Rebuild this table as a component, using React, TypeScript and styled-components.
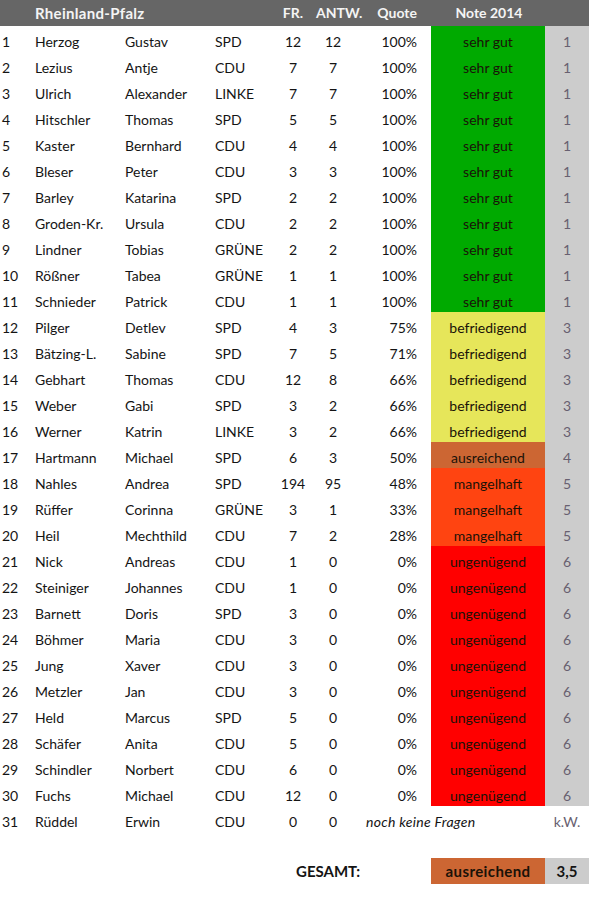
import * as React from 'react';
import styled, { createGlobalStyle } from 'styled-components';

const GlobalStyle = createGlobalStyle`
  body {
    margin: 0;
    background: #ffffff;
    font-family: Lato, 'Noto Sans', 'DejaVu Sans', sans-serif;
    color: #141414;
  }
`;

const COLS = '33px 90px 90px 57px 44px 36px 81px 114px 44px';

const grades: Record<number, { label: string; bg: string }> = {
  1: { label: 'sehr gut', bg: '#00aa00' },
  3: { label: 'befriedigend', bg: '#e6e65a' },
  4: { label: 'ausreichend', bg: '#cc6633' },
  5: { label: 'mangelhaft', bg: '#ff4411' },
  6: { label: 'ungenügend', bg: '#ff0000' },
};

type Row = [string, string, string, number, number, number | null];

const rows: Row[] = [
  ['Herzog', 'Gustav', 'SPD', 12, 12, 1],
  ['Lezius', 'Antje', 'CDU', 7, 7, 1],
  ['Ulrich', 'Alexander', 'LINKE', 7, 7, 1],
  ['Hitschler', 'Thomas', 'SPD', 5, 5, 1],
  ['Kaster', 'Bernhard', 'CDU', 4, 4, 1],
  ['Bleser', 'Peter', 'CDU', 3, 3, 1],
  ['Barley', 'Katarina', 'SPD', 2, 2, 1],
  ['Groden-Kr.', 'Ursula', 'CDU', 2, 2, 1],
  ['Lindner', 'Tobias', 'GRÜNE', 2, 2, 1],
  ['Rößner', 'Tabea', 'GRÜNE', 1, 1, 1],
  ['Schnieder', 'Patrick', 'CDU', 1, 1, 1],
  ['Pilger', 'Detlev', 'SPD', 4, 3, 3],
  ['Bätzing-L.', 'Sabine', 'SPD', 7, 5, 3],
  ['Gebhart', 'Thomas', 'CDU', 12, 8, 3],
  ['Weber', 'Gabi', 'SPD', 3, 2, 3],
  ['Werner', 'Katrin', 'LINKE', 3, 2, 3],
  ['Hartmann', 'Michael', 'SPD', 6, 3, 4],
  ['Nahles', 'Andrea', 'SPD', 194, 95, 5],
  ['Rüffer', 'Corinna', 'GRÜNE', 3, 1, 5],
  ['Heil', 'Mechthild', 'CDU', 7, 2, 5],
  ['Nick', 'Andreas', 'CDU', 1, 0, 6],
  ['Steiniger', 'Johannes', 'CDU', 1, 0, 6],
  ['Barnett', 'Doris', 'SPD', 3, 0, 6],
  ['Böhmer', 'Maria', 'CDU', 3, 0, 6],
  ['Jung', 'Xaver', 'CDU', 3, 0, 6],
  ['Metzler', 'Jan', 'CDU', 3, 0, 6],
  ['Held', 'Marcus', 'SPD', 5, 0, 6],
  ['Schäfer', 'Anita', 'CDU', 5, 0, 6],
  ['Schindler', 'Norbert', 'CDU', 6, 0, 6],
  ['Fuchs', 'Michael', 'CDU', 12, 0, 6],
  ['Rüddel', 'Erwin', 'CDU', 0, 0, null],
];

const Sheet = styled.div`
  width: 589px;
  font-size: 14px;
`;

const Line = styled.div<{ $head?: boolean }>`
  display: grid;
  grid-template-columns: ${COLS};
  height: 26px;
  background: ${(p) => (p.$head ? '#666666' : 'transparent')};
  color: ${(p) => (p.$head ? '#f4f4f4' : '#141414')};
  font-weight: ${(p) => (p.$head ? 700 : 400)};
`;

const Cell = styled.div<{ $align?: 'left' | 'center' | 'right'; $pad?: number }>`
  text-align: ${(p) => p.$align || 'left'};
  padding-left: ${(p) => (p.$align === 'right' ? 0 : p.$pad ?? 2)}px;
  padding-right: ${(p) => (p.$align === 'right' ? p.$pad ?? 14 : 0)}px;
  padding-top: 6px;
  line-height: 20px;
  white-space: nowrap;
  box-sizing: border-box;
`;

const Head = styled(Cell)`
  padding-top: 0;
  line-height: 26px;
`;

const Title = styled(Head)`
  grid-column: span 2;
  font-size: 15px;
  letter-spacing: 0.3px;
`;

const Note = styled(Cell)<{ $bg: string }>`
  background: ${(p) => p.$bg};
  text-align: center;
  padding-left: 0;
  color: #1a1208;
`;

const Grade = styled(Cell)<{ $plain?: boolean }>`
  background: ${(p) => (p.$plain ? 'transparent' : '#cccccc')};
  color: #686070;
  text-align: center;
  padding-left: 0;
`;

const Pending = styled(Cell)`
  grid-column: span 2;
  font-style: italic;
  padding-left: 16px;
  letter-spacing: 0.3px;
`;

const Footer = styled(Line)`
  margin-top: 26px;
  font-weight: 700;
  font-size: 15px;
`;

const TotalLabel = styled.div`
  grid-column: 1 / span 7;
  padding-left: 296px;
  line-height: 26px;
`;

const TotalNote = styled(Note)`
  padding-top: 0;
  line-height: 26px;
  letter-spacing: 0.4px;
`;

const TotalGrade = styled(Grade)`
  padding-top: 0;
  line-height: 26px;
  color: #141414;
`;

export default function App() {
  return (
    <Sheet>
      <GlobalStyle />
      <Line $head>
        <Head />
        <Title>Rheinland-Pfalz</Title>
        <Head />
        <Head $align="center">FR.</Head>
        <Head $align="center">ANTW.</Head>
        <Head $align="right">Quote</Head>
        <Head $align="center">Note 2014</Head>
        <Head />
      </Line>
      {rows.map(([last, first, party, fr, antw, grade], i) => {
        const quote = fr > 0 ? Math.floor((antw / fr) * 100) + '%' : '';
        return (
          <Line key={i}>
            <Cell>{i + 1}</Cell>
            <Cell>{last}</Cell>
            <Cell>{first}</Cell>
            <Cell>{party}</Cell>
            <Cell $align="center">{fr}</Cell>
            <Cell $align="center">{antw}</Cell>
            {grade ? (
              <>
                <Cell $align="right">{quote}</Cell>
                <Note $bg={grades[grade].bg}>{grades[grade].label}</Note>
                <Grade>{grade}</Grade>
              </>
            ) : (
              <>
                <Pending>noch keine Fragen</Pending>
                <Grade $plain>k.W.</Grade>
              </>
            )}
          </Line>
        );
      })}
      <Footer>
        <TotalLabel>GESAMT:</TotalLabel>
        <TotalNote $bg="#cc6633">ausreichend</TotalNote>
        <TotalGrade>3,5</TotalGrade>
      </Footer>
    </Sheet>
  );
}
